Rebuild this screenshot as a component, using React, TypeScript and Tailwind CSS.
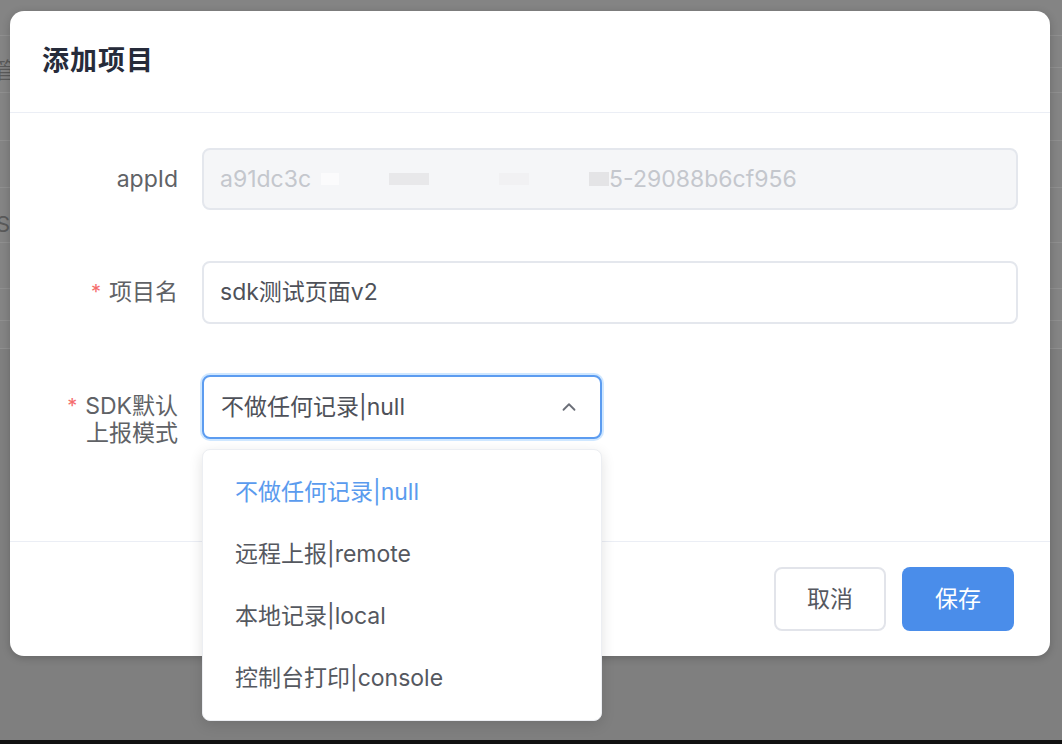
import { ChevronUp } from 'lucide-react';

const font = { fontFamily: 'Inter, "Noto Sans CJK SC", sans-serif' };

const bgLines = [35, 67, 92, 140, 187, 242, 288, 320, 348];

const options = ['不做任何记录|null', '远程上报|remote', '本地记录|local', '控制台打印|console'];

function Label({ text, required, lines }: { text: string[]; required?: boolean; lines?: boolean }) {
  return (
    <div className={`w-[136px] shrink-0 flex justify-end text-[23px] text-[#606266] leading-[27px] ${lines ? 'pt-[18px]' : ''}`}>
      {required && <span className="text-[#f56c6c] mr-[8px] text-[20px]">*</span>}
      <div className="text-right">
        {text.map((t) => (
          <div key={t}>{t}</div>
        ))}
      </div>
    </div>
  );
}

export default function App() {
  return (
    <div className="relative w-[1062px] h-[744px] overflow-hidden bg-[#7f7f7f]" style={font}>
      {/* page behind the overlay */}
      <div className="h-[348px] bg-[#848484] relative">
        {bgLines.map((y) => (
          <div key={y} className="absolute left-0 right-0 h-px bg-[#8f8f8f]" style={{ top: y }} />
        ))}
        <span className="absolute left-[-6px] top-[54px] text-[22px] text-[#5a5a5a]">管</span>
        <span className="absolute left-[-4px] top-[208px] text-[22px] text-[#5a5a5a]">S</span>
      </div>
      <div className="absolute left-0 right-0 bottom-0 h-[4px] bg-[#111]" />

      {/* modal */}
      <div className="absolute left-[10px] top-[11px] w-[1040px] h-[645px] bg-white rounded-[14px] shadow-[0_2px_8px_rgba(0,0,0,0.2)] flex flex-col">
        <div className="h-[102px] border-b border-[#ebeef5] px-8 flex items-center">
          <h2 className="text-[27px] font-semibold text-[#262b3a] tracking-[1px]">添加项目</h2>
        </div>

        <div className="h-[429px] pt-[35px] pr-8 flex flex-col gap-[51px] border-b border-[#ebeef5]">
          <div className="flex items-center gap-6 pl-8">
            <Label text={['appId']} />
            <div className="flex-1 h-[62px] rounded-[8px] border-2 border-[#e4e7ed] bg-[#f5f6f8] flex items-center px-4 text-[23px] text-[#c4c7cd]">
              <span>a91dc3c</span>
              <span className="ml-[10px] w-[18px] h-[12px] bg-[#fbfbfc]" />
              <span className="ml-[50px] w-[40px] h-[12px] bg-[#e8e8ea]" />
              <span className="ml-[70px] w-[30px] h-[12px] bg-[#f1f1f3]" />
              <span className="ml-[60px] w-[20px] h-[14px] bg-[#e4e4e6]" />
              <span>5-29088b6cf956</span>
            </div>
          </div>

          <div className="flex items-center gap-6 pl-8">
            <Label text={['项目名']} required />
            <div className="flex-1 h-[63px] rounded-[8px] border-2 border-[#e4e7ed] bg-white flex items-center px-4 text-[23px] text-[#4e5159]">
              sdk测试页面v2
            </div>
          </div>

          <div className="flex items-start gap-6 pl-8">
            <Label text={['SDK默认', '上报模式']} required lines />
            <div className="relative">
              <div className="w-[400px] h-[64px] rounded-[8px] border-2 border-[#5c9cf0] shadow-[0_0_0_2px_rgba(64,158,255,0.25)] bg-white flex items-center justify-between pl-[17px] pr-[20px] text-[23px] text-[#4e5159]">
                <span>不做任何记录|null</span>
                <ChevronUp size={22} strokeWidth={2} className="text-[#6b6f78]" />
              </div>

              <div className="absolute left-0 top-[74px] z-10 w-[400px] py-[11px] bg-white rounded-[8px] border border-[#eceef2] shadow-[0_4px_14px_rgba(0,0,0,0.12)]">
                {options.map((o, i) => (
                  <div
                    key={o}
                    className={`h-[62px] flex items-center px-8 text-[23px] ${i === 0 ? 'text-[#5a9bee]' : 'text-[#55585f]'}`}
                  >
                    {o}
                  </div>
                ))}
              </div>
            </div>
          </div>
        </div>

        <div className="flex-1 flex items-center justify-end gap-4 pr-[36px]">
          <button className="w-[112px] h-[64px] rounded-[8px] border-2 border-[#e2e4ea] bg-white text-[23px] text-[#55585f]">
            取消
          </button>
          <button className="w-[112px] h-[64px] rounded-[8px] bg-[#4a8dea] text-[23px] text-white">
            保存
          </button>
        </div>
      </div>
    </div>
  );
}
